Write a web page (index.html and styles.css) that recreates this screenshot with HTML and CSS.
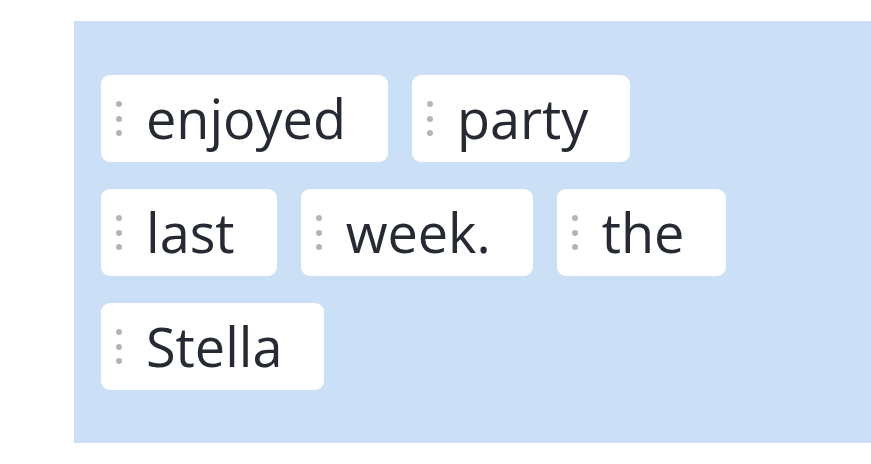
FILE: index.html
```html
<!DOCTYPE html>
<html>
<head>
<meta charset="utf-8">
<link rel="stylesheet" href="styles.css">
</head>
<body>
<div class="page">
  <div class="panel">
    <div class="chips">
      <div class="chip"><span class="handle"><i></i><i></i><i></i></span><span class="word">enjoyed</span></div>
      <div class="chip"><span class="handle"><i></i><i></i><i></i></span><span class="word">party</span></div>
      <div class="chip"><span class="handle"><i></i><i></i><i></i></span><span class="word">last</span></div>
      <div class="chip"><span class="handle"><i></i><i></i><i></i></span><span class="word">week.</span></div>
      <div class="chip"><span class="handle"><i></i><i></i><i></i></span><span class="word">the</span></div>
      <div class="chip"><span class="handle"><i></i><i></i><i></i></span><span class="word">Stella</span></div>
    </div>
  </div>
</div>
</body>
</html>
```
FILE: styles.css
```css
html, body {
  margin: 0;
  padding: 0;
  background: #ffffff;
}
.page {
  padding: 21px 0 0 74px;
}
.panel {
  background: #cbdff6;
  height: 422px;
  box-sizing: border-box;
  padding: 54px 27px;
}
.chips {
  width: 700px;
  display: flex;
  flex-wrap: wrap;
  align-content: flex-start;
  row-gap: 27px;
  column-gap: 24px;
}
.chip {
  height: 87px;
  background: #ffffff;
  border-radius: 9px;
  display: flex;
  align-items: center;
  padding: 0 42px 0 13px;
  box-sizing: border-box;
}
.handle {
  width: 10px;
  display: flex;
  flex-direction: column;
  align-items: center;
  gap: 8.5px;
  margin-right: 22px;
}
.handle i {
  display: block;
  width: 6px;
  height: 6px;
  border-radius: 50%;
  background: #b5b5b5;
}
.word {
  font-family: "Open Sans", sans-serif;
  font-size: 54px;
  line-height: 1;
  color: #262b33;
  position: relative;
  top: -1px;
}
```
